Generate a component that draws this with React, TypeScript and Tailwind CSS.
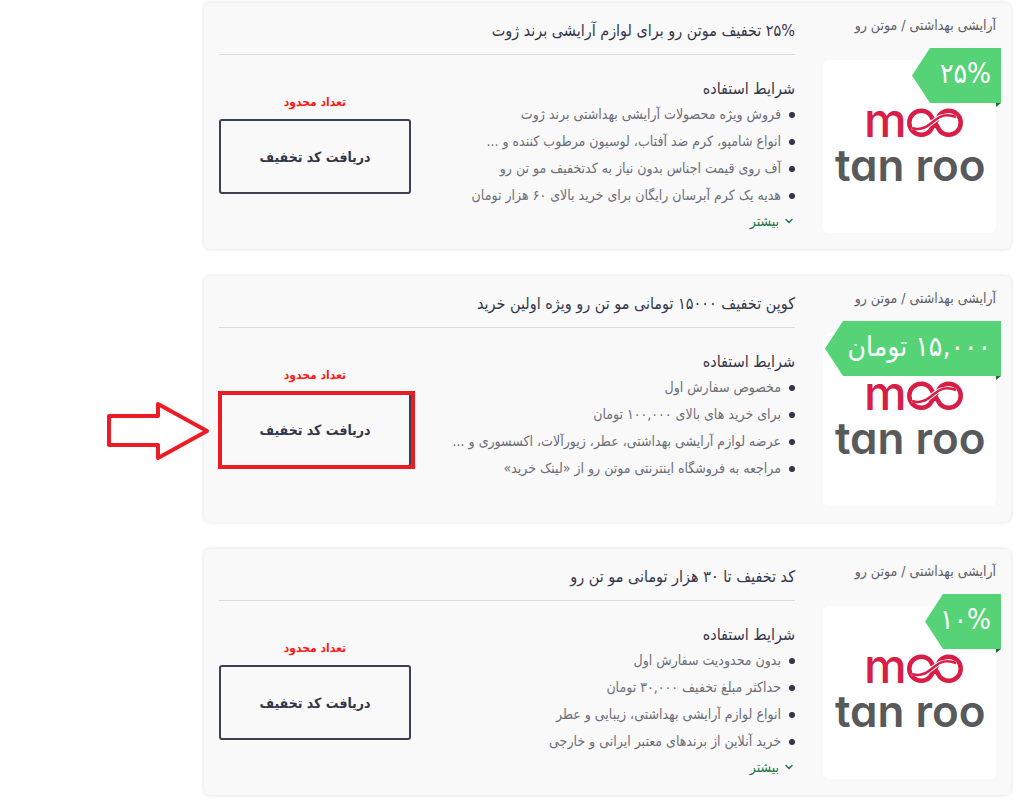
import { useState } from "react";
import { ChevronDown } from "lucide-react";

interface Coupon {
  id: number;
  title: string;
  ribbon: string;
  ribbonWidth: string;
  terms: string[];
  hasMore: boolean;
  highlighted: boolean;
}

const CATEGORY = "آرایشی بهداشتی / موتن رو";

const COUPONS: Coupon[] = [
  {
    id: 1,
    title: "۲۵% تخفیف موتن رو برای لوازم آرایشی برند ژوت",
    ribbon: "۲۵%",
    ribbonWidth: "w-[89px]",
    terms: [
      "فروش ویژه محصولات آرایشی بهداشتی برند ژوت",
      "انواع شامپو، کرم ضد آفتاب، لوسیون مرطوب کننده و ...",
      "آف روی قیمت اجناس بدون نیاز به کدتخفیف مو تن رو",
      "هدیه یک کرم آبرسان رایگان برای خرید بالای ۶۰ هزار تومان",
    ],
    hasMore: true,
    highlighted: false,
  },
  {
    id: 2,
    title: "کوپن تخفیف ۱۵۰۰۰ تومانی مو تن رو ویژه اولین خرید",
    ribbon: "۱۵,۰۰۰ تومان",
    ribbonWidth: "w-[176px]",
    terms: [
      "مخصوص سفارش اول",
      "برای خرید های بالای ۱۰۰,۰۰۰ تومان",
      "عرضه لوازم آرایشی بهداشتی، عطر، زیورآلات، اکسسوری و ...",
      "مراجعه به فروشگاه اینترنتی موتن رو از «لینک خرید»",
    ],
    hasMore: false,
    highlighted: true,
  },
  {
    id: 3,
    title: "کد تخفیف تا ۳۰ هزار تومانی مو تن رو",
    ribbon: "۱۰%",
    ribbonWidth: "w-[76px]",
    terms: [
      "بدون محدودیت سفارش اول",
      "حداکثر مبلغ تخفیف ۳۰,۰۰۰ تومان",
      "انواع لوازم آرایشی بهداشتی، زیبایی و عطر",
      "خرید آنلاین از برندهای معتبر ایرانی و خارجی",
    ],
    hasMore: true,
    highlighted: false,
  },
];

function StoreLogo() {
  return (
    <svg
      viewBox="0 0 173 173"
      direction="ltr"
      className="block w-full font-['Inter',sans-serif] [font-feature-settings:'cv11']"
    >
      <text x="41" y="77" fontSize="48" fontWeight="500" fill="#d81e46">
        m
      </text>
      <g fill="none" stroke="#d81e46">
        <path
          d="M107 54.500 A12 12 0 1 0 107 71 L117 54.500 A12 12 0 1 1 117 71 Z"
          strokeWidth="4.500"
          strokeLinejoin="round"
        />
        <path
          d="M89 67 C99 70 105 66 111 61 C117 56 123 54 133 58"
          stroke="#fff"
          strokeWidth="4.500"
        />
        <path
          d="M89 68 C99 71 105 66 111 61 C117 56 123 53 133 57"
          strokeWidth="2.500"
        />
      </g>
      <text x="12" y="121" fontSize="44" fontWeight="600" fill="#58595b">
        tan roo
      </text>
    </svg>
  );
}

function Ribbon({ label, width }: { label: string; width: string }) {
  return (
    <div className={`absolute -top-3 -right-[5px] ${width}`}>
      <div className="flex h-[55px] items-center justify-start bg-[#56d377] pr-2.5 pb-1 text-[28px] leading-none whitespace-nowrap text-white [clip-path:polygon(0_50%,18px_0,100%_0,100%_100%,18px_100%)]">
        {label}
      </div>
      {/* folded corner, on the left end of the 5px overhang */}
      <div className="h-1 w-[5px] bg-[#1d6b35] [clip-path:polygon(0_0,100%_0,0_100%)]" />
    </div>
  );
}

// Hand-drawn style marker around the button, with an arrow from the left
function Highlight() {
  return (
    <div className="pointer-events-none absolute -top-px -right-1 -bottom-0.5 -left-px border-4 border-[#ed1c24]">
      <svg
        width="104"
        height="62"
        viewBox="0 0 104 62"
        className="absolute top-1 right-full mr-3"
      >
        <path
          d="M3 17 H52 V5 L101 32 L52 59 V46 H3 Z"
          fill="none"
          stroke="#ed1c24"
          strokeWidth="4"
          strokeLinejoin="round"
        />
      </svg>
    </div>
  );
}

function CouponCard({ coupon }: { coupon: Coupon }) {
  const [open, setOpen] = useState(false);

  return (
    <article className="flex gap-7 rounded-md bg-[#f9f9f9] px-[15px] pt-3 pb-4 shadow-[0_0_4px_rgba(0,0,0,0.14)]">
      <div className="w-[173px] shrink-0">
        <p className="text-sm leading-5 whitespace-nowrap text-[#5d5f68]">
          {CATEGORY}
        </p>
        <div className="relative mt-[25px] rounded-md bg-white">
          <StoreLogo />
          <Ribbon label={coupon.ribbon} width={coupon.ribbonWidth} />
        </div>
      </div>

      <div className="min-w-0 flex-1">
        <h2 className="h-10 border-b border-[#dcdcdc] text-base leading-8 font-normal whitespace-nowrap text-[#33364a]">
          {coupon.title}
        </h2>
        <div className="flex justify-between">
          <div className="mt-[22px]">
            <h3 className="text-base leading-6 text-[#33364a]">
              شرایط استفاده
            </h3>
            <ul>
              {coupon.terms.map((term) => (
                <li
                  key={term}
                  className="flex items-center gap-2 text-sm leading-[27px] whitespace-nowrap text-[#6c6e78]"
                >
                  <span className="size-1.5 rounded-full bg-[#33364a]" />
                  {term}
                </li>
              ))}
            </ul>
            {coupon.hasMore && (
              <button
                type="button"
                aria-expanded={open}
                onClick={() => setOpen(!open)}
                className="flex items-center gap-1 text-sm leading-6 text-[#1f7a48]"
              >
                <ChevronDown size={12} strokeWidth={3} />
                بیشتر
              </button>
            )}
          </div>

          <div className="mt-[37px] w-48 shrink-0 text-center">
            <p className="text-xs leading-5 font-bold text-[#ff1a1a]">
              تعداد محدود
            </p>
            <div className="relative mt-[7px]">
              <button
                type="button"
                className="h-[75px] w-full rounded-[3px] border-2 border-[#3d4052] text-sm font-bold text-[#33364a]"
              >
                دریافت کد تخفیف
              </button>
              {coupon.highlighted && <Highlight />}
            </div>
          </div>
        </div>
      </div>
    </article>
  );
}

export default function App() {
  return (
    <main
      dir="rtl"
      lang="fa"
      className="flex min-h-screen flex-col gap-[27px] bg-white pt-[3px] pr-[13px] pb-4 pl-[204px] font-['DejaVu_Sans_Condensed','DejaVu_Sans',sans-serif]"
    >
      {COUPONS.map((coupon) => (
        <CouponCard key={coupon.id} coupon={coupon} />
      ))}
    </main>
  );
}
